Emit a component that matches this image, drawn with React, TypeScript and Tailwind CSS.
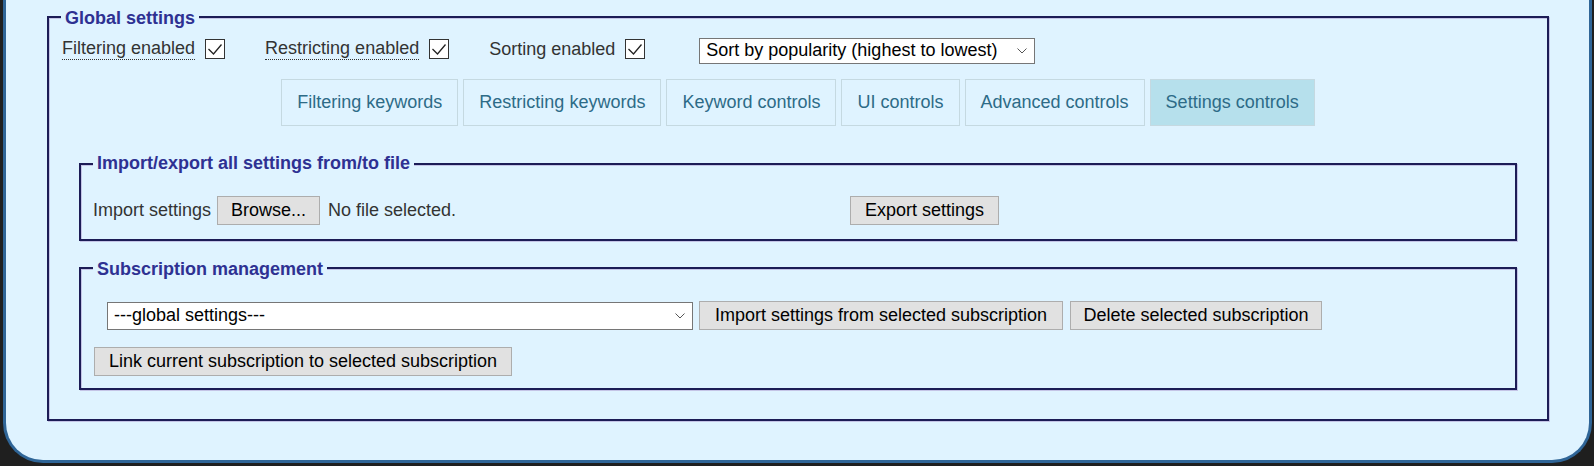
import type { ReactNode } from "react";

const Check = () => (
  <span className="ml-[10px] flex h-[20px] w-[20px] items-center justify-center border border-[#333] bg-white">
    <svg width="18" height="18" viewBox="0 0 18 18">
      <polyline points="2.5,9 7.5,14 15.5,4.5" fill="none" stroke="#222" strokeWidth="1.3" />
    </svg>
  </span>
);

const Chevron = () => (
  <svg className="pointer-events-none absolute right-[8px] top-1/2 -translate-y-1/2" width="10" height="6" viewBox="0 0 10 6">
    <polyline points="0.5,0.5 5,5 9.5,0.5" fill="none" stroke="#555" strokeWidth="1" />
  </svg>
);

function Fieldset({
  legend,
  legendTop,
  className,
  children,
}: {
  legend: string;
  legendTop: string;
  className: string;
  children: ReactNode;
}) {
  return (
    <div
      className={`relative border-2 border-[#1c1c56] shadow-[1px_1px_0_#c4c4e6,inset_1px_1px_0_#c4c4e6] ${className}`}
    >
      <span
        className={`absolute left-[12px] ${legendTop} bg-[#dff3ff] px-[4px] text-[18px] font-bold leading-[21px] text-[#2e3192]`}
      >
        {legend}
      </span>
      {children}
    </div>
  );
}

const btn =
  "h-[29px] border border-[#adadad] bg-[#e1e1e1] text-center text-[18px] leading-[21px] text-black";

export default function App() {
  const tabs = [
    "Filtering keywords",
    "Restricting keywords",
    "Keyword controls",
    "UI controls",
    "Advanced controls",
    "Settings controls",
  ];

  return (
    <div className="h-[466px] w-[1594px] bg-[#1f1f1f] font-['Liberation_Sans',Arial,sans-serif] text-[18px] text-[#333]">
      <div className="ml-[3px] mr-[2px] h-[463px] rounded-b-[40px] border-x-[3px] border-b-[3px] border-[#2f6597] bg-[#dff3ff] pl-[41px] pr-[40px] pt-[16px]">
        <Fieldset legend="Global settings" legendTop="top-[-10px]" className="h-[405px]">
          {/* toggles */}
          <div className="mt-[17px] flex h-[28px] items-center pl-[13px]">
            <span className="border-b border-dotted border-[#333] leading-[21px]">Filtering enabled</span>
            <Check />
            <span className="ml-[40px] border-b border-dotted border-[#333] leading-[21px]">Restricting enabled</span>
            <Check />
            <span className="ml-[40px] leading-[21px]">Sorting enabled</span>
            <Check />
            <div className="relative ml-[54px] mt-[2px] self-start">
              <select className="h-[26px] w-[336px] appearance-none border border-[#767676] bg-white pl-[6px] text-[18px] leading-[21px] text-black outline-none">
                <option>Sort by popularity (highest to lowest)</option>
              </select>
              <Chevron />
            </div>
          </div>

          {/* tabs */}
          <div className="mt-[16px] flex justify-center gap-[5px]">
            {tabs.map((t) => (
              <div
                key={t}
                className={`flex h-[47px] items-center border border-[#c5d9e1] px-[15px] leading-[21px] text-[#2d6b87] ${
                  t === "Settings controls" ? "bg-[#b6e0ec]" : "bg-[#dff3ff]"
                }`}
              >
                {t}
              </div>
            ))}
          </div>

          <div className="px-[30px]">
            <Fieldset
              legend="Import/export all settings from/to file"
              legendTop="top-[-12px]"
              className="mt-[37px] h-[78px]"
            >
              <div className="flex items-center pl-[12px] pt-[31px]">
                <div className="flex w-[757px] items-center">
                  <span className="leading-[21px]">Import settings</span>
                  <button className={`${btn} ml-[6px] w-[103px]`}>Browse...</button>
                  <span className="ml-[8px] leading-[21px]">No file selected.</span>
                </div>
                <button className={`${btn} w-[149px]`}>Export settings</button>
              </div>
            </Fieldset>

            <Fieldset legend="Subscription management" legendTop="top-[-10px]" className="mt-[26px] h-[123px]">
              <div className="pl-[13px] pt-[32px]">
                <div className="flex items-center">
                  <div className="relative ml-[13px]">
                    <select className="h-[28px] w-[586px] appearance-none border border-[#767676] bg-white pl-[6px] text-[18px] leading-[21px] text-black outline-none">
                      <option>---global settings---</option>
                    </select>
                    <Chevron />
                  </div>
                  <button className={`${btn} ml-[6px] w-[364px]`}>Import settings from selected subscription</button>
                  <button className={`${btn} ml-[7px] w-[252px]`}>Delete selected subscription</button>
                </div>
                <button className={`${btn} mt-[17px] w-[418px]`}>Link current subscription to selected subscription</button>
              </div>
            </Fieldset>
          </div>
        </Fieldset>
      </div>
    </div>
  );
}
